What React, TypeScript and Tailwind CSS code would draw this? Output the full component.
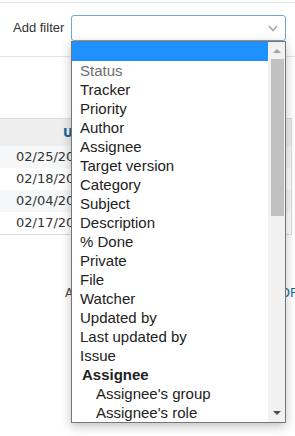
import React from "react";

const items: { label: string; kind?: "disabled" | "group" | "child" }[] = [
  { label: "Status", kind: "disabled" },
  { label: "Tracker" },
  { label: "Priority" },
  { label: "Author" },
  { label: "Assignee" },
  { label: "Target version" },
  { label: "Category" },
  { label: "Subject" },
  { label: "Description" },
  { label: "% Done" },
  { label: "Private" },
  { label: "File" },
  { label: "Watcher" },
  { label: "Updated by" },
  { label: "Last updated by" },
  { label: "Issue" },
  { label: "Assignee", kind: "group" },
  { label: "Assignee's group", kind: "child" },
  { label: "Assignee's role", kind: "child" },
];

const dates = ["02/25/2020", "02/18/2020", "02/04/2020", "02/17/2020"];

export default function App() {
  return (
    <div className="relative w-[295px] h-[436px] overflow-hidden bg-white font-['Liberation_Sans',Arial,sans-serif]">
      <div className="pt-[2px]">
        <div className="border-t border-[#e5e5e5]" />
        {/* filter row */}
        <div className="flex items-center pl-[13px] pt-[12px] pb-[15px] border-b border-[#e5e5e5]">
          <span className="text-[13px] text-[#333] w-[58px]">Add filter</span>
          <div className="relative w-[215px] h-[26px] rounded-[3px] border border-[#6ea7d9] bg-white">
            <svg className="absolute right-[7px] top-[9px]" width="10" height="7" viewBox="0 0 10 7">
              <polyline points="1,1 5,5.5 9,1" fill="none" stroke="#a8a8a8" strokeWidth="1.6" />
            </svg>
          </div>
        </div>
        {/* table */}
        <div className="mt-[61px] mr-[3px] border-t border-b border-r border-[#dcdcdc] font-['DejaVu_Sans',Verdana,sans-serif] text-[13px] text-[#333]">
          <div className="h-[27px] bg-[#eeeeee] flex items-center pl-[63px] font-bold text-[#169] text-[12px]">
            Updated
          </div>
          {dates.map((d, i) => (
            <div
              key={i}
              className={`h-[22px] flex items-center pl-[16px] ${i % 2 === 0 ? "bg-[#f6f7f8]" : "bg-white"}`}
            >
              {d}
            </div>
          ))}
        </div>
        <div className="mt-[49px] flex justify-between pl-[65px] text-[12px] font-['DejaVu_Sans',Verdana,sans-serif]">
          <span className="text-[#484848]">Also</span>
          <span className="text-[#169] -mr-[2px]">PDF</span>
        </div>
      </div>

      {/* open dropdown */}
      <div className="absolute left-[71px] top-[41px] w-[215px] h-[382px] border border-[#767676] bg-white flex shadow-[0_3px_10px_rgba(0,0,0,0.25)]">
        <div className="flex-1 flex flex-col text-[15px] leading-[19px] text-[#222]">
          <div className="h-[19px] bg-[#1e90ff]" />
          {items.map((it, i) => (
            <div
              key={i}
              className={
                it.kind === "disabled"
                  ? "h-[19px] pl-[8px] text-[#6d6d6d] whitespace-nowrap"
                  : it.kind === "group"
                  ? "h-[19px] pl-[10px] font-bold whitespace-nowrap"
                  : it.kind === "child"
                  ? "h-[19px] pl-[24px] whitespace-nowrap"
                  : "h-[19px] pl-[8px] whitespace-nowrap"
              }
            >
              {it.label}
            </div>
          ))}
        </div>
        <div className="w-[17px] bg-[#f1f1f1] flex flex-col items-center">
          <div className="h-[17px] flex items-center justify-center">
            <svg width="8" height="5" viewBox="0 0 8 5">
              <polygon points="0,5 4,1 8,5" fill="#a3a3a3" />
            </svg>
          </div>
          <div className="w-[13px] h-[157px] bg-[#c1c1c1] ml-[2px]" />
          <div className="flex-1" />
          <div className="h-[17px] flex items-center justify-center">
            <svg width="8" height="5" viewBox="0 0 8 5">
              <polygon points="0,0 8,0 4,4" fill="#505050" />
            </svg>
          </div>
        </div>
      </div>
    </div>
  );
}
